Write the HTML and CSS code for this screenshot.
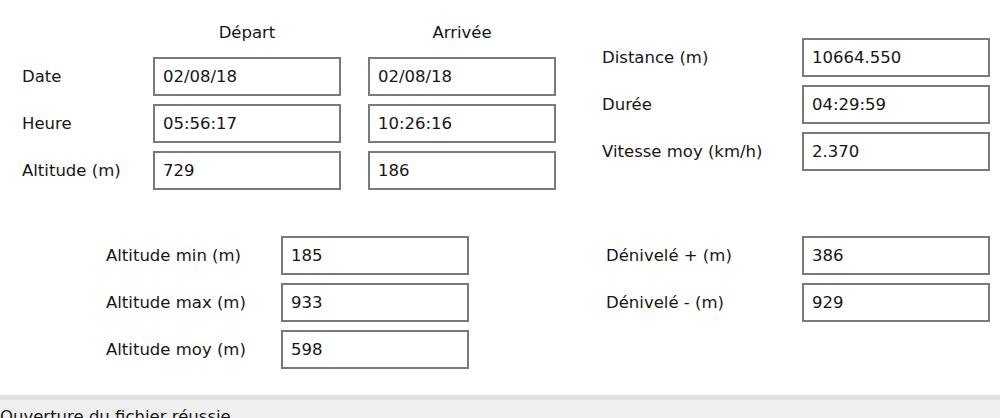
FILE: index.html
```html
<!DOCTYPE html>
<html lang="fr">
  <head>
    <meta charset="UTF-8" />
    <meta name="viewport" content="width=device-width, initial-scale=1.0" />
    <title>Statistiques de la trace</title>
    <link rel="stylesheet" href="styles.css">
  </head>
  <body>
    <div id="main">
      <div id="top-section">
        <div id="points-grid">
          <div></div>
          <div class="col-header">Départ</div>
          <div class="col-header">Arrivée</div>

          <div class="field-label">Date</div>
          <div class="field-box">02/08/18</div>
          <div class="field-box">02/08/18</div>

          <div class="field-label">Heure</div>
          <div class="field-box">05:56:17</div>
          <div class="field-box">10:26:16</div>

          <div class="field-label">Altitude (m)</div>
          <div class="field-box">729</div>
          <div class="field-box">186</div>
        </div>

        <div id="totals-grid">
          <div class="field-label">Distance (m)</div>
          <div class="field-box">10664.550</div>

          <div class="field-label">Durée</div>
          <div class="field-box">04:29:59</div>

          <div class="field-label">Vitesse moy (km/h)</div>
          <div class="field-box">2.370</div>
        </div>
      </div>

      <div id="bottom-section">
        <div id="altitude-grid">
          <div class="field-label">Altitude min (m)</div>
          <div class="field-box">185</div>

          <div class="field-label">Altitude max (m)</div>
          <div class="field-box">933</div>

          <div class="field-label">Altitude moy (m)</div>
          <div class="field-box">598</div>
        </div>

        <div id="elevation-grid">
          <div class="field-label">Dénivelé + (m)</div>
          <div class="field-box">386</div>

          <div class="field-label">Dénivelé - (m)</div>
          <div class="field-box">929</div>
        </div>
      </div>
    </div>

    <div id="status-bar">Ouverture du fichier réussie</div>
  </body>
</html>
```

FILE: styles.css
```css
body {
  font-family: "DejaVu Sans", Tahoma, sans-serif;
  font-size: 16.5px;
  line-height: 20px;
  color: #161616;
  background-color: #ffffff;
  margin: 0;
  padding: 0;
  overflow: hidden;
}
#main {
  height: 395px;
}
#top-section {
  display: flex;
  align-items: flex-start;
}
#points-grid {
  display: grid;
  grid-template-columns: 104px 188px 188px;
  grid-template-rows: 26px 39px 39px 39px;
  column-gap: 27px;
  row-gap: 8px;
  margin-left: 22px;
  padding-top: 23px;
}
#totals-grid {
  display: grid;
  grid-template-columns: 180px 188px;
  grid-auto-rows: 39px;
  column-gap: 20px;
  row-gap: 8px;
  margin-left: 46px;
  padding-top: 38px;
}
#bottom-section {
  display: flex;
  align-items: flex-start;
  margin-top: 46px;
}
#altitude-grid {
  display: grid;
  grid-template-columns: 155px 188px;
  grid-auto-rows: 39px;
  column-gap: 20px;
  row-gap: 8px;
  margin-left: 106px;
}
#elevation-grid {
  display: grid;
  grid-template-columns: 176px 188px;
  grid-auto-rows: 39px;
  column-gap: 20px;
  row-gap: 8px;
  margin-left: 137px;
}
.col-header {
  text-align: center;
  align-self: start;
}
.field-label {
  align-self: center;
  white-space: nowrap;
}
.field-box {
  box-sizing: border-box;
  border: 2px solid #7a7a7a;
  padding: 0 8px;
  display: flex;
  align-items: center;
  background: #ffffff;
}
#status-bar {
  box-sizing: border-box;
  height: 23px;
  overflow: hidden;
  background-color: #efefef;
  border-top: 5px solid #e1e1e1;
  padding-top: 7px;
  white-space: nowrap;
}
```
